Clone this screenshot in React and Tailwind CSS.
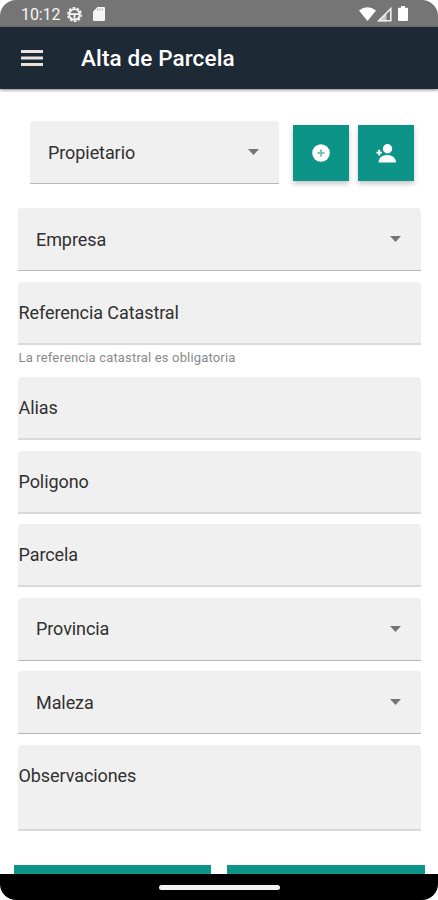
const Caret = () => (
  <svg className="h-[6px] w-[11px] shrink-0 fill-[#757575]" viewBox="0 0 11 6">
    <path d="M0 0h11L5.500 6z" />
  </svg>
)

const SelectField = ({ label, className = '' }) => (
  <div
    className={`flex h-[63px] items-center justify-between rounded-t border-b-[1.5px] border-[#b8b8b8] bg-[#f0f0f0] pl-[18px] pr-5 ${className}`}
  >
    <span>{label}</span>
    <Caret />
  </div>
)

const TextField = ({ label, className = '' }) => (
  <div className={`flex h-[63px] items-center rounded-t border-b-2 border-[#dadada] bg-[#f0f0f0] pl-[0.5px] ${className}`}>
    {label}
  </div>
)

const IconButton = ({ children }) => (
  <button className="flex size-14 items-center justify-center bg-[#0d9488] shadow-[0_3px_5px_rgba(0,0,0,0.22)]">
    {children}
  </button>
)

const StatusBar = () => (
  <div className="flex h-[27px] shrink-0 items-center bg-[#757575] pl-[21px] pr-[30px] text-[#f5f5f5]">
    <span className="w-[40px] pt-[2px] text-[16px] tracking-[-0.1px]">10:12</span>
    <svg className="ml-[6px] mt-px size-[15px]" viewBox="0 0 15 15" fill="none" stroke="currentColor">
      <circle cx="7.5" cy="7.5" r="6.800" strokeWidth="1.400" strokeDasharray="2.700 1.570" />
      <circle cx="7.5" cy="7.5" r="5.300" strokeWidth="1.800" />
      <path d="M2.500 7.200h10M7.500 7.200v5" strokeWidth="1.700" />
    </svg>
    <svg className="ml-[11px] mt-px h-[14px] w-[12px]" viewBox="0 0 12 14" fill="currentColor">
      <path d="M4.500 0H11a1 1 0 0 1 1 1v12a1 1 0 0 1-1 1H1a1 1 0 0 1-1-1V4.500z" />
      <path d="M4.600 1.500v2M6.900 1.500v2M9.200 1.500v2" stroke="#a5a5a5" strokeWidth="1" />
    </svg>
    <svg className="ml-auto h-[14px] w-[17px]" viewBox="0 0 17 14" fill="#fff">
      <path d="M0 3.500Q8.500-3.200 17 3.500L8.500 14z" />
    </svg>
    <svg className="ml-[1px] mt-px size-[15px]" viewBox="0 0 15 15">
      <path d="M13.800 1.700v12.100H1.700z" fill="none" stroke="#eee" strokeWidth="1.600" />
      <path d="M1 14.500 9.500 6v8.500z" fill="#eee" opacity=".7" />
    </svg>
    <svg className="ml-[6px] h-[15px] w-[10px]" viewBox="0 0 10 15" fill="#fff">
      <path d="M3 0h4v1.700h2a1 1 0 0 1 1 1V14a1 1 0 0 1-1 1H1a1 1 0 0 1-1-1V2.700a1 1 0 0 1 1-1h2z" />
    </svg>
  </div>
)

const Header = () => (
  <header className="relative flex h-[62px] shrink-0 items-center bg-[#1e2936] pl-[21px] text-white shadow-[0_1px_3px_rgba(0,0,0,0.5)]">
    <svg className="h-[16px] w-[22px]" viewBox="0 0 22 16" fill="#e8e3dd">
      <path d="M0 0h22v3H0zM0 6.500h22v3H0zM0 13h22v3H0z" />
    </svg>
    <h1 className="ml-[38px] pt-px text-[22.5px] font-medium tracking-[0.12px]">Alta de Parcela</h1>
  </header>
)

const App = () => (
  <div className="h-[900px] w-[438px] bg-white">
    <div className="flex h-full flex-col overflow-hidden rounded-[16px] bg-white font-['Roboto',sans-serif] text-[18px] tracking-[-0.08px] text-[#303030]">
      <StatusBar />
      <Header />

      <main className="min-h-0 flex-1 overflow-hidden pl-[18px] pr-[17.5px] pt-[32px]">
        <div className="flex items-start pl-3">
          <SelectField label="Propietario" className="h-[62px] w-[249px]" />
          <div className="ml-[13.5px] mt-1 flex gap-[9.5px]">
            <IconButton>
              <svg className="size-[18px]" viewBox="0 0 18 18">
                <circle cx="9" cy="9" r="8.800" fill="#fff" />
                <path d="M9 5.500v7M5.500 9h7" stroke="#7cc0b8" strokeWidth="2" />
              </svg>
            </IconButton>
            <IconButton>
              <svg className="h-[19px] w-[20px]" viewBox="0 0 20 19" fill="#fff">
                <circle cx="11.500" cy="4.700" r="4.700" />
                <path d="M2.500 18.500c0-4.500 3.500-7.500 8.700-7.500s8.800 3 8.800 7.500z" />
                <path d="M3.200 5.800v5.600M.4 8.600H6" stroke="#fff" strokeWidth="1.900" />
              </svg>
            </IconButton>
          </div>
        </div>

        <SelectField label="Empresa" className="mt-[24px]" />
        <TextField label="Referencia Catastral" className="mt-[11px]" />
        <p className="h-[32.4px] pt-[4px] pl-[0.5px] text-[13px] leading-[17px] tracking-[0.17px] text-[#8a8a8a]">
          La referencia catastral es obligatoria
        </p>
        <div className="flex flex-col gap-[10.5px]">
          <TextField label="Alias" />
          <TextField label="Poligono" />
          <TextField label="Parcela" />
          <SelectField label="Provincia" />
          <SelectField label="Maleza" />
          <div className="h-[86px] rounded-t border-b-2 border-[#dadada] bg-[#f0f0f0] pl-[0.5px] pt-[17.500px]">
            Observaciones
          </div>
        </div>

        <div className="-mx-1 mt-[34px] flex gap-4">
          <div className="h-14 flex-1 bg-[#0d9488]" />
          <div className="h-14 flex-1 bg-[#0d9488]" />
        </div>
      </main>

      <div className="flex h-[26px] shrink-0 justify-center bg-black pt-[11px]">
        <div className="h-[5px] w-[121px] rounded-full bg-[#f5f0f5]" />
      </div>
    </div>
  </div>
)

export default App
